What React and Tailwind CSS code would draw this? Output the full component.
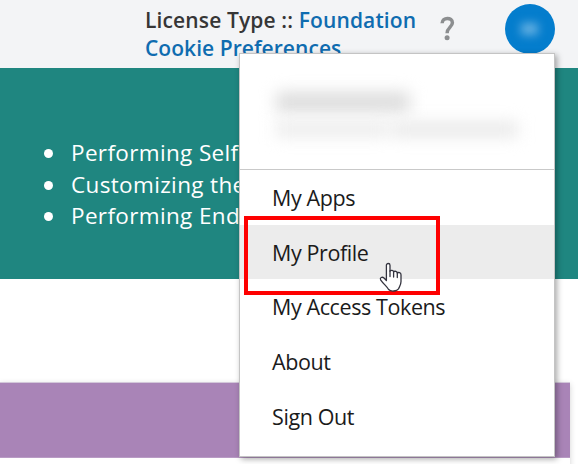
const topics = ["Performing Self", "Customizing the", "Performing End"];

function MenuItem({ label, active = false }) {
  return (
    <li className={`flex h-[54.6px] items-center pl-[32px] text-[21.5px] leading-7 text-[#1b1b1b] ${active ? "bg-[#ececec]" : ""}`}>
      <span className="translate-y-[1px] whitespace-nowrap font-[370] tracking-[-0.4px]">{label}</span>
    </li>
  );
}

function AccountMenu() {
  return (
    <div className="absolute left-[239px] top-[53px] h-[404px] w-[316px] border border-[#c4c4c4] bg-white shadow-[2px_2px_6px_rgba(0,0,0,0.35)]">
      <div className="h-[116px] border-b border-[#c9c9c9] pl-[36px] pt-[38px]">
        <div className="h-[20px] w-[134px] rounded bg-[#dcdcdc] blur-[8px]" />
        <div className="mt-[9px] flex h-[16px] items-end gap-[4px] blur-[8px]">
          <div className="h-[16px] w-[112px] bg-[#ececec]" />
          <div className="h-[15px] w-[126px] bg-[#e8e8e8]" />
        </div>
      </div>
      <ul>
        <MenuItem label="My Apps" />
        <MenuItem label="My Profile" active />
        <MenuItem label="My Access Tokens" />
        <MenuItem label="About" />
        <MenuItem label="Sign Out" />
      </ul>
    </div>
  );
}

function HandCursor() {
  return (
    <svg className="absolute left-[379px] top-[262px] h-[30px] w-[24px]" viewBox="0 0 24 30" fill="none">
      <path
        d="M7.4 18.5V3.3C7.4 .9 11 .9 11 3.3V9.2C11.8 7.8 14.6 8.2 14.6 9.9C15.6 8.7 18.3 9.2 18.3 11C19.4 10 22 10.6 22 12.8V19.5C22 23 20.7 24.2 19.5 26.7C18 29.5 11.6 29.8 9.6 27.5C8.4 25 4.5 22 1.6 17.8C.6 15.6 3.2 14.4 5 16Z"
        fill="#fff"
        stroke="#34343f"
        strokeWidth="1.3"
        strokeLinejoin="round"
      />
      <path d="M11 9V14.5M14.6 10V15M18.3 11V15.5" stroke="#34343f" strokeWidth="1.3" strokeLinecap="round" />
    </svg>
  );
}

export default function App() {
  return (
    <div className="relative h-[464px] w-[578px] overflow-hidden bg-white font-['Open_Sans','Noto_Sans',sans-serif]">
      <header className="flex h-[68px] bg-[#f3f4f6] pl-[145px]">
        <div className="w-[295px] whitespace-nowrap pt-[6px] text-[21px] font-[650] leading-[28px] tracking-[0.13px] text-[#0f6cb0]">
          <p><span className="text-[#363636]">License Type ::</span> Foundation</p>
          <p className="tracking-[0.05px]">Cookie Preferences</p>
        </div>
        <svg className="mt-[16px] h-[25px] w-[16px]" viewBox="0 0 16 25" fill="none">
          <path d="M2.1 7.3C2.3 .8 12.4 .9 12.4 6.8C12.4 11 7.1 11.5 7.1 17.2" stroke="#8c8e90" strokeWidth="3.5" />
          <circle cx="7.1" cy="21.7" r="2.5" fill="#8c8e90" />
        </svg>
        <div className="ml-[48.5px] mt-[4px] flex size-[50px] shrink-0 items-center justify-center rounded-full bg-[#047dcd]">
          <div className="h-[12px] w-[17px] bg-[#65b0e2] blur-[5px]" />
        </div>
      </header>
      <section className="h-[211px] bg-[#1f8680] pt-[69px]">
        <ul className="text-[22.5px] font-[430] leading-[31.5px] tracking-[0.35px] text-white">
          {topics.map((topic) => (
            <li key={topic} className="flex items-center whitespace-nowrap pl-[44px]">
              <span className="mr-[18px] mt-[2px] size-[9px] rounded-full bg-white" />
              {topic}
            </li>
          ))}
        </ul>
      </section>
      <section className="mt-[103px] h-[100px] w-[570px] bg-white shadow-[0_2px_6px_rgba(0,0,0,0.18)]">
        <div className="h-[76px] border-y border-t-[#d3c8da] border-b-[#b99bc5] bg-[#a984b7]" />
      </section>
      <AccountMenu />
      <div className="absolute left-[244px] top-[216px] h-[79px] w-[196px] border-4 border-[#fe0000]" />
      <HandCursor />
    </div>
  );
}
